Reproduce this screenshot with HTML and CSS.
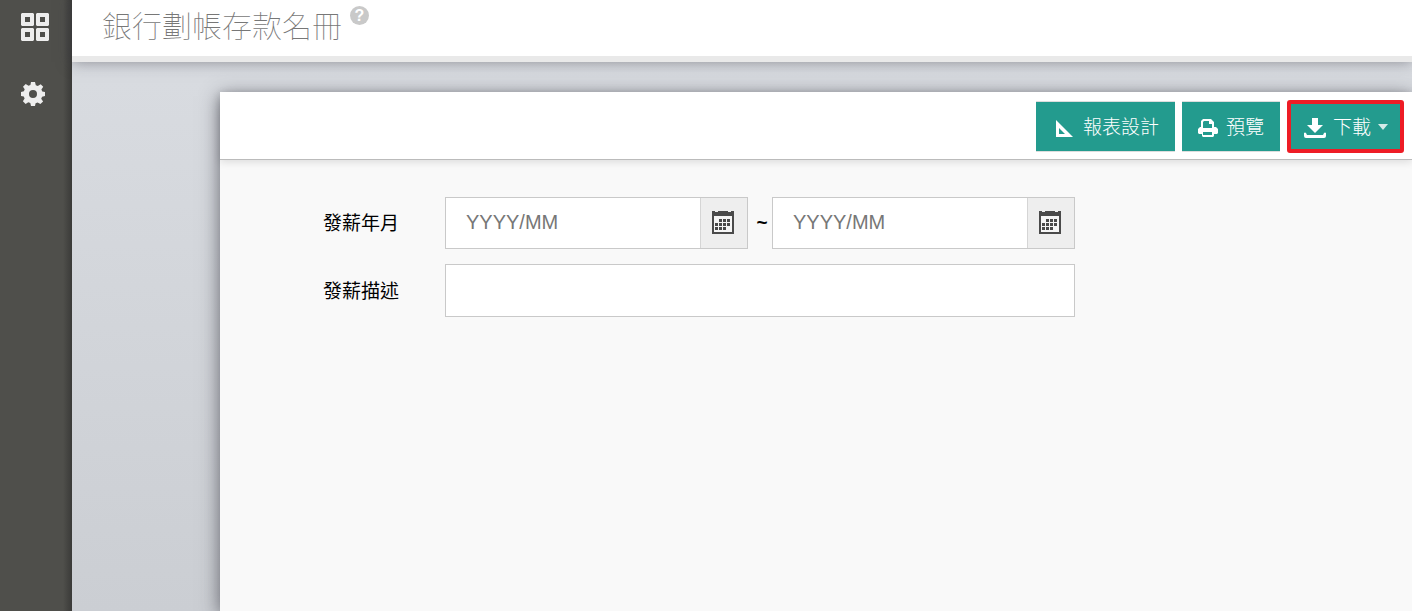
FILE: index.html
```html
<!DOCTYPE html>
<html lang="zh-Hant">
<head>
  <meta charset="UTF-8" />
  <meta name="viewport" content="width=device-width, initial-scale=1.0"/>
  <title>銀行劃帳存款名冊</title>
  <link rel="stylesheet" href="styles.css">
</head>
<body>
  <nav class="sidebar">
    <a href="#" aria-label="選單">
      <svg width="28" height="28" viewBox="0 0 28 28" fill="#eee" fill-rule="evenodd">
        <path d="M1 0h11l1 1v11l-1 1H1l-1-1V1zM4 4v5h5V4z"/>
        <path d="M16 0h11l1 1v11l-1 1H16l-1-1V1zM19 4v5h5V4z"/>
        <path d="M1 15h11l1 1v11l-1 1H1l-1-1V16zM4 19v5h5v-5z"/>
        <path d="M16 15h11l1 1v11l-1 1H16l-1-1V16zM19 19v5h5v-5z"/>
      </svg>
    </a>
    <a href="#" aria-label="設定">
      <svg width="24" height="24" viewBox="0 0 24 24" fill="#eee" fill-rule="evenodd">
        <path d="M10 0h4l.8 3.200 2 .8 2.900-1.700 2.500 2.500L20.400 7.500l.9 2L24 10v4l-2.900.7-.9 2 1.900 2.700-2.700 2.700-2.800-1.700-2 .8L14 24h-4l-.7-2.900-2-.8-2.700 1.700-2.700-2.700 1.700-2.700-.8-2L0 14v-4l2.900-.7.8-2L2 4.700 4.700 2l2.800 1.800 1.900-.8zM12 8a4 4 0 1 0 0 8 4 4 0 0 0 0-8z"/>
      </svg>
    </a>
  </nav>

  <div class="main">
    <header>
      <h1>銀行劃帳存款名冊</h1>
      <a href="#" class="help" aria-label="說明">?</a>
    </header>

    <div class="panel">
      <div class="toolbar">
        <button type="button" class="design">
          <svg width="17" height="17" viewBox="0 0 17 17" fill="#fff" fill-rule="evenodd">
            <path d="M0 0l17 17H0zM3 8v6h6z"/>
          </svg>
          報表設計
        </button>
        <button type="button">
          <svg width="20" height="18" viewBox="0 0 20 18" fill="#fff" fill-rule="evenodd">
            <path d="M5 0h8l3 3v5h2l2 2v4l-1 1h-3v2l-1 1H5l-1-1v-2H1l-1-1v-4l2-2h1V2zM6 2L5 3v6h9V5h-3V2zM5 13v3h9v-3z"/>
          </svg>
          預覽
        </button>
        <button type="button" class="download">
          <svg width="22" height="20" viewBox="0 0 22 20" fill="#fff">
            <path d="M8 0h6v7h5l-8 8-8-8h5z"/>
            <path d="M0 15q1-1 2 0l1 2h16l1-2q1-1 2 0v3q0 2-2 2H2q-2 0-2-2z"/>
          </svg>
          下載
          <span class="caret"></span>
        </button>
      </div>

      <form>
        <label for="dateFrom">發薪年月</label>
        <div class="range">
          <div class="date">
            <input type="text" id="dateFrom" placeholder="YYYY/MM" />
            <button type="button" aria-label="選擇開始年月">
              <svg width="22" height="23" viewBox="0 0 22 23">
                <path d="M1 5v17h20V5" fill="#f6f6f6" stroke="#4a4a4a" stroke-width="2"/>
                <path d="M0 0h3v1h3V0h10v1h3V0h3v5H0z" fill="#4a4a4a"/>
                <path d="M7 9.500h12M3 13.500h16M3 17.500h12" stroke="#4a4a4a" stroke-width="3" stroke-dasharray="3 1" fill="none"/>
              </svg>
            </button>
          </div>
          <span class="tilde">~</span>
          <div class="date">
            <input type="text" id="dateTo" placeholder="YYYY/MM" aria-label="結束年月" />
            <button type="button" aria-label="選擇結束年月">
              <svg width="22" height="23" viewBox="0 0 22 23">
                <path d="M1 5v17h20V5" fill="#f6f6f6" stroke="#4a4a4a" stroke-width="2"/>
                <path d="M0 0h3v1h3V0h10v1h3V0h3v5H0z" fill="#4a4a4a"/>
                <path d="M7 9.500h12M3 13.500h16M3 17.500h12" stroke="#4a4a4a" stroke-width="3" stroke-dasharray="3 1" fill="none"/>
              </svg>
            </button>
          </div>
        </div>
        <label for="desc">發薪描述</label>
        <input type="text" id="desc" class="desc" />
      </form>
    </div>
  </div>
</body>
</html>
```
FILE: styles.css
```css
* {
  box-sizing: border-box;
}

body {
  margin: 0;
  min-height: 100vh;
  display: flex;
  font-family: "Liberation Sans", "Noto Sans CJK TC", sans-serif;
  font-size: 19px;
  color: #000;
}

button, input {
  font: inherit;
  margin: 0;
}

svg {
  display: block;
  flex: none;
}

.sidebar {
  width: 72px;
  flex: none;
  padding: 13px 0 0 21px;
  display: flex;
  flex-direction: column;
  gap: 41px;
  background: linear-gradient(to left, #3a3a38, #4f4f4b 9px);
}

.main {
  flex: 1;
  min-width: 0;
  display: flex;
  flex-direction: column;
  background: linear-gradient(#dadde2, #cbced3);
}

header {
  height: 62px;
  padding: 0 30px;
  display: flex;
  gap: 8px;
  background: #fff;
  border-bottom: 6px solid #e9e9e9;
  box-shadow: 0 0 14px rgba(60, 60, 70, 0.5);
}

h1 {
  margin: 0;
  font-size: 30px;
  font-weight: 100;
  line-height: 54px;
  color: #777;
}

.help {
  width: 19px;
  height: 19px;
  margin-top: 6px;
  border-radius: 50%;
  background: #c9c9c9;
  color: #fff;
  font-size: 16px;
  font-weight: bold;
  line-height: 19px;
  text-align: center;
  text-decoration: none;
}

.panel {
  flex: 1;
  margin: 30px 0 0 148px;
  background: #f9f9f9;
  box-shadow: 0 4px 18px rgba(50, 50, 60, 0.7);
}

.toolbar {
  height: 68px;
  padding: 8px 8px 0;
  display: flex;
  justify-content: flex-end;
  gap: 7px;
  background: #fff;
  border-bottom: 1px solid #bbb;
  box-shadow: 0 2px 8px rgba(0, 0, 0, 0.12);
}

.toolbar button {
  height: 51px;
  margin-top: 1px;
  padding: 0 16px 3px;
  display: flex;
  align-items: center;
  gap: 8px;
  border: 1px solid #ddd;
  border-width: 1px 0;
  background: #239b8e;
  color: #fff;
  font-weight: 300;
  font-size: 19px;
  cursor: pointer;
}

.toolbar svg {
  margin-top: 6px;
}

.toolbar .design {
  padding-left: 20px;
  gap: 10px;
}

.toolbar .download {
  height: 53px;
  margin-top: 0;
  padding: 0 12px 3px 13px;
  gap: 7px;
  border: 4px solid #ee1c25;
  border-radius: 3px;
}

.caret {
  margin-top: 4px;
  border: 5px solid transparent;
  border-top: 6px solid #d3ebe8;
  border-bottom: 0;
}

form {
  padding: 37px 20px 20px 103px;
  display: grid;
  grid-template-columns: 122px minmax(0, 630px);
  row-gap: 15px;
  align-items: center;
}

label {
  padding-bottom: 3px;
}

.range {
  display: flex;
  align-items: center;
}

.date {
  flex: 1;
  min-width: 0;
  height: 52px;
  display: flex;
  border: 1px solid #c9c9c9;
  background: #fff;
}

.date input {
  flex: 1;
  min-width: 0;
  padding: 0 20px 2px;
  border: 0;
  font-size: 20px;
}

.date button {
  width: 47px;
  flex: none;
  padding: 0 0 1px 11px;
  border: 0;
  border-left: 1px solid #d5d5d5;
  background: #eee;
}

input::placeholder {
  color: #777;
}

.tilde {
  width: 24px;
  flex: none;
  padding-left: 4px;
  font-weight: bold;
  text-align: center;
}

.desc {
  min-width: 0;
  height: 53px;
  padding: 0 20px;
  border: 1px solid #c9c9c9;
  background: #fff;
}
```
